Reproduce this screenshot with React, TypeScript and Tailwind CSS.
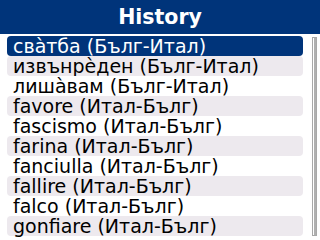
import React from "react";

const items = [
  "свàтба (Бълг-Итал)",
  "извънрèден (Бълг-Итал)",
  "лишàвам (Бълг-Итал)",
  "favore (Итал-Бълг)",
  "fascismo (Итал-Бълг)",
  "farina (Итал-Бълг)",
  "fanciulla (Итал-Бълг)",
  "fallire (Итал-Бълг)",
  "falco (Итал-Бълг)",
  "gonfiare (Итал-Бълг)",
];

export default function App() {
  return (
    <div className="w-[320px] h-[240px] bg-white overflow-hidden flex flex-col" style={{ fontFamily: '"DejaVu Sans", sans-serif' }}>
      <div className="h-[34px] bg-[#00347a] flex items-center justify-center">
        <span className="text-white font-bold text-[20.5px] leading-none">History</span>
      </div>
      <div className="flex flex-1 mt-[2px]">
        <div className="flex flex-col pl-[7px] w-[303px]">
          {items.map((t, i) => {
            const sel = i === 0;
            const bg = sel ? "bg-[#00347a] text-white" : i % 2 === 1 ? "bg-[#ede9ee] text-black" : "bg-white text-black";
            return (
              <div key={i} className={`h-[20px] rounded-[4px] flex items-center pl-[6px] text-[19px] leading-none whitespace-nowrap ${bg}`}>
                {t}
              </div>
            );
          })}
        </div>
        <div className="ml-[9px] mt-[1px] w-[5px] h-[199px] border border-[#a8a8a8] bg-white flex justify-center">
          <div className="w-[2px] h-full bg-[#b0b0b0]" />
        </div>
      </div>
    </div>
  );
}
